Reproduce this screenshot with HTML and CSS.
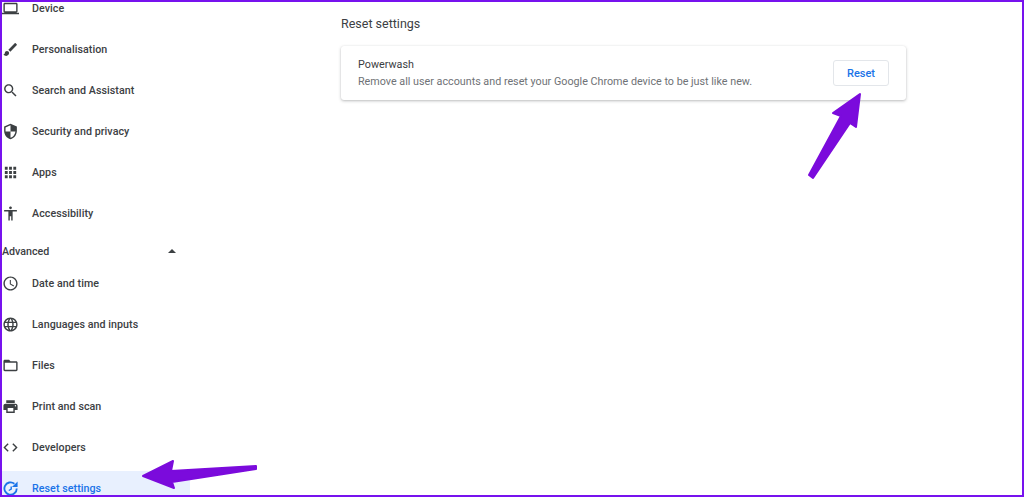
FILE: index.html
```html
<!DOCTYPE html>
<html lang="en">
<head>
<meta charset="utf-8">
<title>Reset settings</title>
<link rel="stylesheet" href="styles.css">
</head>
<body>
<div class="page">
  <nav class="sidebar">
    <div class="group">
      <div class="row"><svg class="icon" viewBox="0 0 24 24"><path d="M20 18c1.1 0 1.99-.9 1.99-2L22 6c0-1.1-.9-2-2-2H4c-1.1 0-2 .9-2 2v10c0 1.1.9 2 2 2H0v2h24v-2h-4zM4 6h16v10H4V6z"/></svg><span>Device</span></div>
      <div class="row"><svg class="icon" viewBox="0 0 24 24"><path d="M7 14c-1.66 0-3 1.34-3 3 0 1.31-1.16 2-2 2 .92 1.22 2.49 2 4 2 2.21 0 4-1.79 4-4 0-1.66-1.34-3-3-3zm13.71-9.37l-1.34-1.34a.996.996 0 0 0-1.41 0L9 12.25 11.75 15l8.96-8.96a.996.996 0 0 0 0-1.41z"/></svg><span>Personalisation</span></div>
      <div class="row"><svg class="icon" viewBox="0 0 24 24"><path d="M15.5 14h-.79l-.28-.27C15.41 12.59 16 11.11 16 9.5 16 5.91 13.09 3 9.5 3S3 5.91 3 9.5 5.91 16 9.5 16c1.61 0 3.09-.59 4.23-1.57l.27.28v.79l5 4.99L20.49 19l-4.99-5zm-6 0C7.01 14 5 11.99 5 9.5S7.01 5 9.5 5 14 7.01 14 9.5 11.99 14 9.5 14z"/></svg><span>Search and Assistant</span></div>
      <div class="row"><svg class="icon" viewBox="0 0 24 24"><path d="M12 1L3 5v6c0 5.55 3.84 10.74 9 12 5.16-1.26 9-6.45 9-12V5l-9-4zm0 10.99h7c-.53 4.12-3.28 7.79-7 8.94V12H5V6.3l7-3.11v8.8z"/></svg><span>Security and privacy</span></div>
      <div class="row"><svg class="icon" viewBox="0 0 24 24"><path d="M4 8h4V4H4v4zm6 12h4v-4h-4v4zm-6 0h4v-4H4v4zm0-6h4v-4H4v4zm6 0h4v-4h-4v4zm6-10v4h4V4h-4zm-6 4h4V4h-4v4zm6 6h4v-4h-4v4zm0 6h4v-4h-4v4z"/></svg><span>Apps</span></div>
      <div class="row"><svg class="icon" viewBox="0 0 24 24"><path d="M12 2c1.1 0 2 .9 2 2s-.9 2-2 2-2-.9-2-2 .9-2 2-2zm9 7h-6v13h-2v-6h-2v6H9V9H3V7h18v2z"/></svg><span>Accessibility</span></div>
    </div>
    <div class="section-head"><span>Advanced</span><i class="caret"></i></div>
    <div class="group">
      <div class="row"><svg class="icon" viewBox="0 0 24 24"><path d="M11.99 2C6.47 2 2 6.48 2 12s4.47 10 9.99 10C17.52 22 22 17.52 22 12S17.52 2 11.99 2zM12 20c-4.42 0-8-3.58-8-8s3.58-8 8-8 8 3.58 8 8-3.58 8-8 8zm.5-13H11v6l5.25 3.15.75-1.23-4.5-2.67z"/></svg><span>Date and time</span></div>
      <div class="row"><svg class="icon" viewBox="0 0 24 24"><path d="M11.99 2C6.47 2 2 6.48 2 12s4.47 10 9.99 10C17.52 22 22 17.52 22 12S17.52 2 11.99 2zm6.93 6h-2.95c-.32-1.25-.78-2.45-1.38-3.56 1.84.63 3.37 1.91 4.33 3.56zM12 4.04c.83 1.2 1.48 2.53 1.91 3.96h-3.82c.43-1.43 1.08-2.76 1.91-3.96zM4.26 14C4.1 13.36 4 12.69 4 12s.1-1.36.26-2h3.38c-.08.66-.14 1.32-.14 2 0 .68.06 1.34.14 2H4.26zm.82 2h2.95c.32 1.25.78 2.45 1.38 3.56-1.84-.63-3.37-1.9-4.33-3.56zm2.95-8H5.08c.96-1.66 2.49-2.93 4.33-3.56C8.81 5.55 8.35 6.75 8.03 8zM12 19.96c-.83-1.2-1.48-2.53-1.91-3.96h3.82c-.43 1.43-1.08 2.76-1.91 3.96zM14.34 14H9.66c-.09-.66-.16-1.32-.16-2 0-.68.07-1.35.16-2h4.68c.09.65.16 1.32.16 2 0 .68-.07 1.34-.16 2zm.25 5.56c.6-1.11 1.06-2.31 1.38-3.56h2.95c-.96 1.65-2.49 2.93-4.33 3.56zM16.36 14c.08-.66.14-1.32.14-2 0-.68-.06-1.34-.14-2h3.38c.16.64.26 1.31.26 2s-.1 1.36-.26 2h-3.38z"/></svg><span>Languages and inputs</span></div>
      <div class="row"><svg class="icon" viewBox="0 0 24 24"><path d="M20 6h-8l-2-2H4c-1.1 0-1.99.9-1.99 2L2 18c0 1.1.9 2 2 2h16c1.1 0 2-.9 2-2V8c0-1.1-.9-2-2-2zm0 12H4V8h16v10z"/></svg><span>Files</span></div>
      <div class="row"><svg class="icon" viewBox="0 0 24 24"><path d="M19 8H5c-1.66 0-3 1.34-3 3v6h4v4h12v-4h4v-6c0-1.66-1.34-3-3-3zm-3 11H8v-5h8v5zm3-7c-.55 0-1-.45-1-1s.45-1 1-1 1 .45 1 1-.45 1-1 1zm-1-9H6v4h12V3z"/></svg><span>Print and scan</span></div>
      <div class="row"><svg class="icon" viewBox="0 0 24 24"><path d="M9.4 16.6L4.8 12l4.6-4.6L8 6l-6 6 6 6 1.4-1.4zm5.2 0l4.6-4.6-4.6-4.6L16 6l6 6-6 6-1.4-1.4z"/></svg><span>Developers</span></div>
      <div class="row active"><svg class="icon" viewBox="0 0 24 24"><path class="ring" d="M17.5 5.2A8.7 8.7 0 1 0 20.8 12"/><path d="M22 2v8h-8zM12 9h2v4.5l-4 2.2-.9-1.7 2.9-1.5z"/></svg><span>Reset settings</span></div>
    </div>
  </nav>
  <main class="content">
    <h1 class="title">Reset settings</h1>
    <section class="card">
      <div class="card-text">
        <div class="card-name">Powerwash</div>
        <div class="card-desc">Remove all user accounts and reset your Google Chrome device to be just like new.</div>
      </div>
      <button class="reset-btn">Reset</button>
    </section>
  </main>
  <svg class="arrows" viewBox="0 0 1024 497">
    <path class="arrow" d="M860 94L856 127L850 123L813 178L809 175L841 116L833 113Z"/>
    <path class="arrow" d="M143 476L173 461L171 471L256 466L256 469L172 482L174 488Z"/>
  </svg>
</div>
</body>
</html>
```
FILE: styles.css
```css
* { box-sizing: border-box; }
html, body { margin: 0; padding: 0; background: #fff; }
.page {
  position: relative;
  width: 1024px;
  height: 497px;
  border: 2px solid #7712ee;
  overflow: hidden;
  display: flex;
  font-family: Roboto, "Liberation Sans", sans-serif;
  color: #3c4043;
}
.sidebar {
  width: 188px;
  flex: none;
  margin-top: -11px;
}
.group { display: flex; flex-direction: column; gap: 7px; }
.row {
  height: 34px;
  display: flex;
  align-items: center;
  gap: 13px;
  font-size: 10.7px;
  font-weight: 500;
  letter-spacing: 0.05px;
}
.icon { width: 17px; height: 17px; flex: none; fill: #3c4043; }
.ring { fill: none; stroke: #1a73e8; stroke-width: 2.6; }
.row.active { background: #e8f0fe; color: #1a73e8; }
.row.active .icon { fill: #1a73e8; }
.section-head {
  height: 22px;
  margin: 10px 0 4px;
  padding: 0 14px 0 0;
  display: flex;
  align-items: center;
  justify-content: space-between;
  font-size: 10.7px;
  font-weight: 500;
}
.caret {
  width: 0;
  height: 0;
  border-left: 4px solid transparent;
  border-right: 4px solid transparent;
  border-bottom: 4px solid #3c4043;
}
.content {
  flex: none;
  width: 565px;
  margin-left: 151px;
}
.title {
  margin: 14px 0 14px;
  font-size: 12.5px;
  line-height: 16px;
  font-weight: 400;
  color: #3c4043;
}
.card {
  height: 54px;
  display: flex;
  align-items: center;
  justify-content: space-between;
  padding: 0 17px;
  background: #fff;
  border-radius: 3px;
  box-shadow: 0 1px 3px rgba(60,64,67,.35), 0 0 1px rgba(60,64,67,.08);
}
.card-name { font-size: 10.75px; line-height: 16px; color: #3c4043; letter-spacing: 0.02px; }
.card-desc { font-size: 10.75px; line-height: 16px; color: #6f7276; margin-top: 1px; }
.reset-btn {
  width: 56px;
  height: 26px;
  padding: 0;
  background: #fff;
  border: 1px solid #e3e6ea;
  border-radius: 3px;
  color: #1a73e8;
  font-family: inherit;
  font-size: 11px;
  font-weight: 500;
}
.arrows {
  position: absolute;
  left: -2px;
  top: -2px;
  width: 1024px;
  height: 497px;
  pointer-events: none;
}
.arrow { fill: #7b0bdc; stroke: #7b0bdc; stroke-width: 2; stroke-linejoin: round; }
```
